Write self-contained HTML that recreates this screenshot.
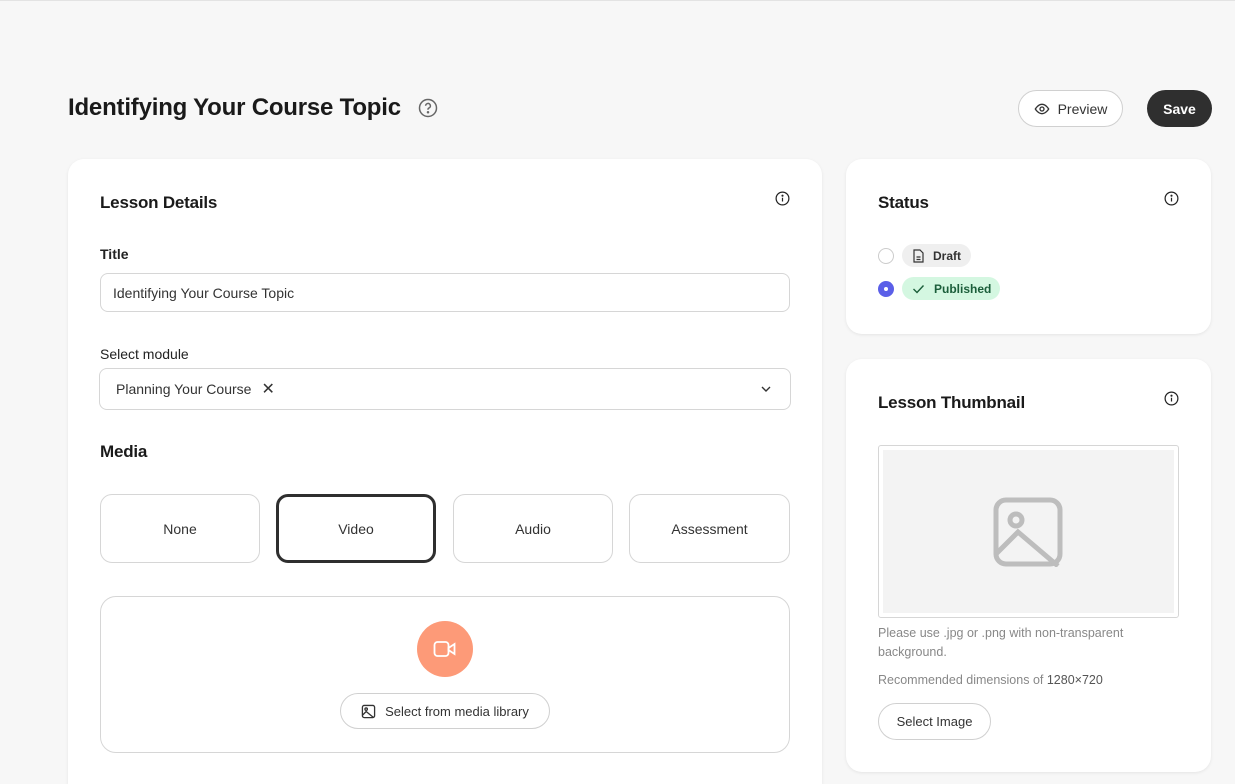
<!DOCTYPE html>
<html style="overflow:hidden"><head><style>
*{box-sizing:border-box;margin:0;padding:0}
html,body{width:1235px;height:784px;overflow:hidden}
body{background:#f7f7f7;font-family:"Liberation Sans",sans-serif;color:#1a1a1a;position:relative}
.a{position:absolute}
.card{position:absolute;background:#fff;border-radius:16px;box-shadow:0 1px 3px rgba(0,0,0,.08)}
.h{font-size:17px;font-weight:bold;color:#1a1a1a;letter-spacing:-0.2px}
.lbl{font-size:14px;color:#222}
.inp{position:absolute;border:1px solid #d6d6d6;border-radius:8px;font-size:14px;color:#333;display:flex;align-items:center}
.mb{position:absolute;top:494px;height:69px;width:160px;border:1px solid #d6d6d6;border-radius:12px;display:flex;align-items:center;justify-content:center;font-size:14px;color:#333}
.btn{position:absolute;border-radius:20px;display:flex;align-items:center;justify-content:center;font-size:13px;font-weight:bold}
.info{position:absolute;width:15px;height:15px}
</style></head><body>
<div class="a" style="left:0;top:0;width:1235px;height:1px;background:#e3e3e3"></div>
<div class="a" style="left:68px;top:94px;font-size:24px;font-weight:bold;letter-spacing:-0.2px">Identifying Your Course Topic</div>
<svg class="a" style="left:418px;top:98px" width="20" height="20" viewBox="0 0 20 20" fill="none" stroke="#666" stroke-width="1.5"><circle cx="10" cy="10" r="8.5"/><path d="M7.6 7.8a2.4 2.4 0 1 1 3.2 2.3c-.6.3-.8.7-.8 1.3v.4"/><circle cx="10" cy="14.2" r=".5" fill="#666"/></svg>

<div class="btn" style="left:1018px;top:90px;width:105px;height:37px;background:#fff;border:1px solid #d0d0d0;color:#333;font-weight:normal;font-size:14px">
<svg width="16" height="16" viewBox="0 0 24 24" fill="none" stroke="#333" stroke-width="2" style="margin-right:8px"><path d="M2 12s4-7 10-7 10 7 10 7-4 7-10 7S2 12 2 12z"/><circle cx="12" cy="12" r="3"/></svg>Preview</div>
<div class="btn" style="left:1147px;top:90px;width:65px;height:37px;background:#2f2f2f;color:#fff;font-size:14px">Save</div>

<div class="card" style="left:68px;top:159px;width:754px;height:625px;border-radius:16px 16px 0 0"></div>
<div class="a h" style="left:100px;top:193px">Lesson Details</div>
<svg class="info" style="left:775px;top:191px" viewBox="0 0 16 16" fill="none" stroke="#222" stroke-width="1.3"><circle cx="8" cy="8" r="6.8"/><path d="M8 7.2v4"/><circle cx="8" cy="5" r=".5" fill="#222"/></svg>
<div class="a lbl" style="left:100px;top:246px;font-weight:bold">Title</div>
<div class="inp" style="left:100px;top:273px;width:690px;height:39px;padding-left:12px">Identifying Your Course Topic</div>
<div class="a lbl" style="left:100px;top:346px">Select module</div>
<div class="inp" style="left:99px;top:368px;width:692px;height:42px;padding-left:16px">Planning Your Course <span style="margin-left:10px;font-size:16px">✕</span>
<svg class="a" style="right:18px;top:14px" width="12" height="12" viewBox="0 0 12 12" fill="none" stroke="#333" stroke-width="1.4"><path d="M2 4l4 4 4-4"/></svg></div>
<div class="a h" style="left:100px;top:442px">Media</div>
<div class="mb" style="left:100px">None</div>
<div class="mb" style="left:276px;border:3px solid #2f2f2f">Video</div>
<div class="mb" style="left:453px">Audio</div>
<div class="mb" style="left:629px;width:161px">Assessment</div>
<div class="a" style="left:100px;top:596px;width:690px;height:157px;border:1px solid #d6d6d6;border-radius:16px"></div>
<div class="a" style="left:417px;top:621px;width:56px;height:56px;border-radius:50%;background:#fd9a78"></div>
<svg class="a" style="left:433px;top:640px" width="24" height="18" viewBox="0 0 24 18" fill="none" stroke="#fff" stroke-width="1.8"><rect x="1.5" y="2" width="14" height="14" rx="3"/><path d="M15.5 8l6-4v10l-6-4z"/></svg>
<div class="btn" style="left:340px;top:693px;width:210px;height:36px;border:1px solid #d0d0d0;color:#333;font-size:13px;font-weight:normal">
<svg width="15" height="15" viewBox="0 0 16 16" fill="none" stroke="#333" stroke-width="1.4" style="margin-right:9px"><rect x="1.5" y="1.5" width="13" height="13" rx="2"/><circle cx="5.5" cy="5.5" r="1.3"/><path d="M1.5 12l4-4 8 6.5"/></svg>Select from media library</div>

<div class="card" style="left:846px;top:159px;width:365px;height:175px"></div>
<div class="a h" style="left:878px;top:193px">Status</div>
<svg class="info" style="left:1164px;top:191px" viewBox="0 0 16 16" fill="none" stroke="#222" stroke-width="1.3"><circle cx="8" cy="8" r="6.8"/><path d="M8 7.2v4"/><circle cx="8" cy="5" r=".5" fill="#222"/></svg>
<div class="a" style="left:878px;top:248px;width:16px;height:16px;border-radius:50%;border:1px solid #ccc"></div>
<div class="a" style="left:902px;top:244px;width:69px;height:23px;border-radius:12px;background:#efefef;font-size:12px;font-weight:bold;color:#333;display:flex;align-items:center;padding-left:10px">
<svg width="13" height="14" viewBox="0 0 13 14" fill="none" stroke="#333" stroke-width="1.2" style="margin-right:8px"><path d="M2 1h6l3 3v9H2z"/><path d="M4.5 8h4M4.5 10.5h4"/></svg>Draft</div>
<div class="a" style="left:878px;top:281px;width:16px;height:16px;border-radius:50%;background:#5b5fe8"></div>
<div class="a" style="left:884px;top:287px;width:4px;height:4px;border-radius:50%;background:#fff"></div>
<div class="a" style="left:902px;top:277px;width:98px;height:23px;border-radius:12px;background:#d4f7e1;font-size:12px;font-weight:bold;color:#1b5e3a;display:flex;align-items:center;padding-left:10px">
<svg width="13" height="12" viewBox="0 0 13 12" fill="none" stroke="#1b5e3a" stroke-width="1.4" style="margin-right:9px"><path d="M1.5 6l3.5 3.5 6.5-7"/></svg>Published</div>

<div class="card" style="left:846px;top:359px;width:365px;height:413px"></div>
<div class="a h" style="left:878px;top:393px">Lesson Thumbnail</div>
<svg class="info" style="left:1164px;top:391px" viewBox="0 0 16 16" fill="none" stroke="#222" stroke-width="1.3"><circle cx="8" cy="8" r="6.8"/><path d="M8 7.2v4"/><circle cx="8" cy="5" r=".5" fill="#222"/></svg>
<div class="a" style="left:878px;top:445px;width:301px;height:173px;border:1px solid #d6d6d6;border-radius:3px;padding:4px"><div style="width:100%;height:100%;background:#f3f3f3"></div></div>
<svg class="a" style="left:993px;top:497px" width="70" height="70" viewBox="0 0 70 70" fill="none" stroke="#bdbdbd" stroke-width="5"><rect x="3" y="3" width="64" height="64" rx="10"/><circle cx="23" cy="23" r="6"/><path d="M3 57l22-22 40 34"/></svg>
<div class="a" style="left:878px;top:624px;font-size:12.5px;color:#888;line-height:19px;width:300px">Please use .jpg or .png with non-transparent background.</div>
<div class="a" style="left:878px;top:673px;font-size:12.5px;color:#888">Recommended dimensions of <span style="color:#555">1280×720</span></div>
<div class="btn" style="left:878px;top:703px;width:113px;height:37px;border:1px solid #d0d0d0;background:#fff;color:#333;font-size:13px;font-weight:normal">Select Image</div>
</body></html>
